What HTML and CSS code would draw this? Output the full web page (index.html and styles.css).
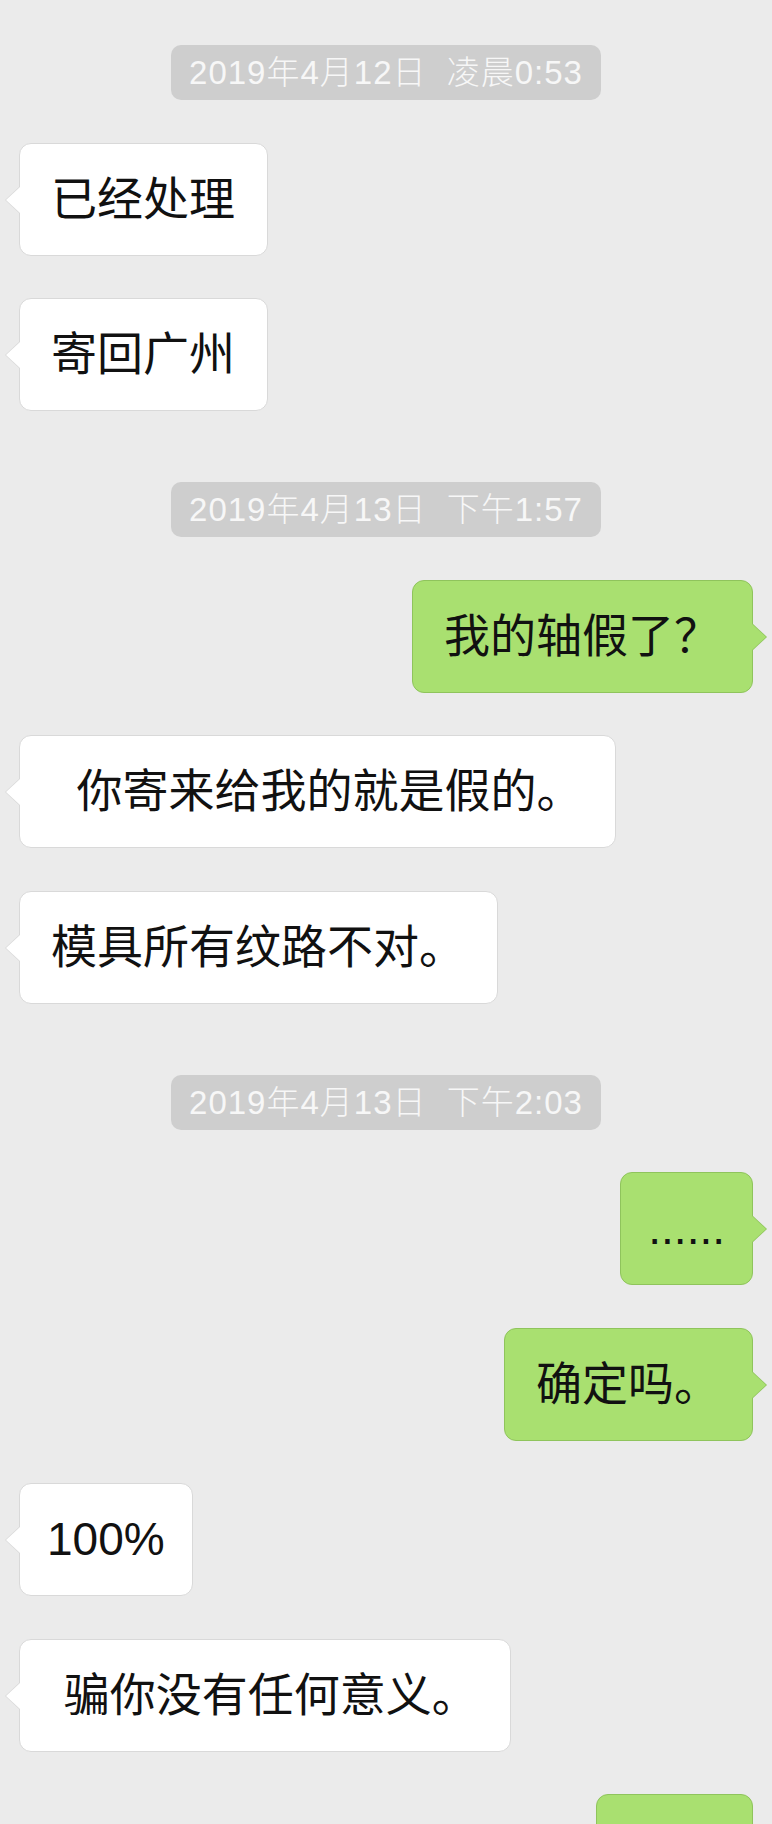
FILE: index.html
```html
<!DOCTYPE html>
<html lang="zh-CN">
<head>
  <meta charset="UTF-8">
  <title>聊天记录</title>
  <link rel="stylesheet" href="styles.css">
</head>
<body>
  <div class="chat">
    <div class="time"><span>2019年4月12日 凌晨0:53</span></div>
    <div class="bubble left">已经处理</div>
    <div class="bubble left">寄回广州</div>

    <div class="time"><span>2019年4月13日 下午1:57</span></div>
    <div class="bubble right">我的轴假了？</div>
    <div class="bubble left">&nbsp;&nbsp;你寄来给我的就是假的。</div>
    <div class="bubble left">模具所有纹路不对。</div>

    <div class="time"><span>2019年4月13日 下午2:03</span></div>
    <div class="bubble right latin">......</div>
    <div class="bubble right">确定吗。</div>
    <div class="bubble left latin">100%</div>
    <div class="bubble left">&nbsp;骗你没有任何意义。</div>
    <div class="bubble right">　　</div>
  </div>
</body>
</html>
```

FILE: styles.css
```css
:root {
  --bg: #ebebeb;
  --white: #ffffff;
  --white-line: #d9d9d9;
  --green: #a9e070;
  --green-line: #8fc45c;
  --pill: #cecece;
}
html, body {
  margin: 0;
  overflow: hidden;
}
body {
  background: var(--bg);
  font-family: "Liberation Sans", "Noto Sans CJK SC", sans-serif;
  color: #111;
}
.chat {
  display: flex;
  flex-direction: column;
  gap: 42.5px;
  padding: 45px 19px 0;
}
.time {
  display: flex;
  justify-content: center;
  margin-top: 28.5px;
}
.time:first-child {
  margin-top: 0;
}
.time span {
  background: var(--pill);
  color: #f7f7f7;
  font-size: 33px;
  font-weight: 300;
  line-height: 55px;
  height: 55px;
  padding: 0 18px;
  border-radius: 10px;
  word-spacing: 10px;
  letter-spacing: 1px;
}
.bubble {
  position: relative;
  font-size: 46px;
  line-height: 63px;
  padding: 24px 32px 24px 31px;
  border: 1px solid;
  border-radius: 12px;
  white-space: nowrap;
}
.bubble.latin {
  padding-left: 27px;
  padding-right: 27px;
}
.bubble::before,
.bubble::after {
  content: '';
  position: absolute;
  width: 0;
  height: 0;
  border-style: solid;
  border-color: transparent;
}
.left {
  align-self: flex-start;
  background: var(--white);
  border-color: var(--white-line);
}
.left::before {
  left: -15px;
  top: 42px;
  border-width: 14px 15px 14px 0;
  border-right-color: var(--white-line);
}
.left::after {
  left: -14px;
  top: 43px;
  border-width: 13px 14px 13px 0;
  border-right-color: var(--white);
}
.right {
  align-self: flex-end;
  background: var(--green);
  border-color: var(--green-line);
}
.right::before {
  right: -15px;
  top: 42px;
  border-width: 14px 0 14px 15px;
  border-left-color: var(--green-line);
}
.right::after {
  right: -14px;
  top: 43px;
  border-width: 13px 0 13px 14px;
  border-left-color: var(--green);
}
```
